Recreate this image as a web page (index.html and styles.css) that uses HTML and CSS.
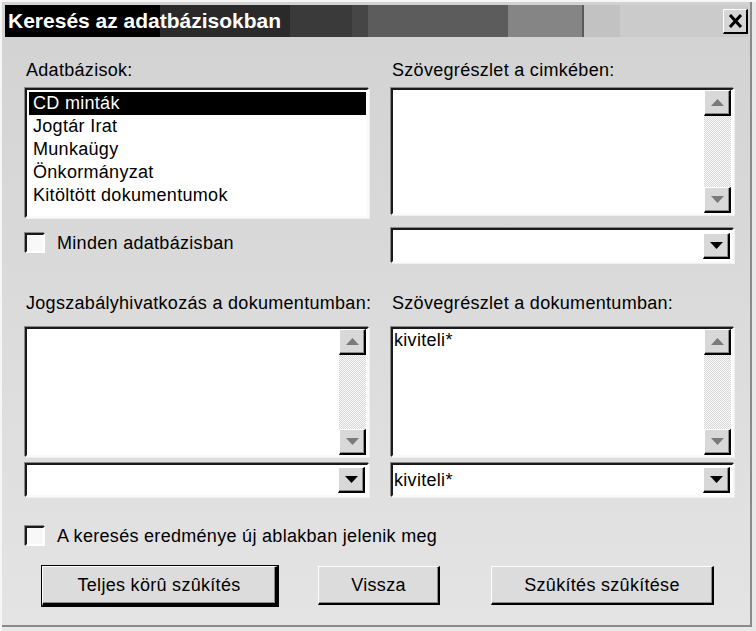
FILE: index.html
```html
<!DOCTYPE html>
<html lang="hu">
<head>
<meta charset="utf-8">
<title>Keresés az adatbázisokban</title>
<link rel="stylesheet" href="styles.css">
</head>
<body>
<div class="window">
    <div class="titlebar">
        <span class="title">Keresés az adatbázisokban</span>
        <div class="close">
            <svg width="15" height="14" viewBox="0 0 15 14"><path d="M2 1 L13 13 M13 1 L2 13" stroke="#000" stroke-width="3"/></svg>
        </div>
    </div>

    <div class="dialog">
        <div class="columns">
            <!-- sor 1 -->
            <div class="label">Adatbázisok:</div>
            <div class="label">Szövegrészlet a cimkében:</div>

            <!-- sor 2 -->
            <ul class="listbox">
                <li class="selected">CD minták</li>
                <li>Jogtár Irat</li>
                <li>Munkaügy</li>
                <li>Önkormányzat</li>
                <li>Kitöltött dokumentumok</li>
            </ul>
            <div class="memo short">
                <div class="memo-text"></div>
                <div class="scroll">
                    <div class="sbtn"><svg width="13" height="7" viewBox="0 0 13 7"><polygon points="0,7 6.5,0 13,7" fill="#7a7a7a"/></svg></div>
                    <div class="track"></div>
                    <div class="sbtn"><svg width="13" height="7" viewBox="0 0 13 7"><polygon points="0,0 13,0 6.5,7" fill="#7a7a7a"/></svg></div>
                </div>
            </div>

            <!-- sor 3 -->
            <div class="check first">
                <span class="box"></span>
                <span>Minden adatbázisban</span>
            </div>
            <div class="combo first">
                <div class="combo-text"></div>
                <div class="sbtn drop"><svg width="13" height="7" viewBox="0 0 13 7"><polygon points="0,0 13,0 6.5,7" fill="#000"/></svg></div>
            </div>

            <!-- sor 4 -->
            <div class="label lower">Jogszabályhivatkozás a dokumentumban:</div>
            <div class="label lower">Szövegrészlet a dokumentumban:</div>

            <!-- sor 5 -->
            <div class="memo tall">
                <div class="memo-text"></div>
                <div class="scroll">
                    <div class="sbtn"><svg width="13" height="7" viewBox="0 0 13 7"><polygon points="0,7 6.5,0 13,7" fill="#7a7a7a"/></svg></div>
                    <div class="track"></div>
                    <div class="sbtn"><svg width="13" height="7" viewBox="0 0 13 7"><polygon points="0,0 13,0 6.5,7" fill="#7a7a7a"/></svg></div>
                </div>
            </div>
            <div class="memo tall">
                <div class="memo-text">kiviteli*</div>
                <div class="scroll">
                    <div class="sbtn"><svg width="13" height="7" viewBox="0 0 13 7"><polygon points="0,7 6.5,0 13,7" fill="#7a7a7a"/></svg></div>
                    <div class="track"></div>
                    <div class="sbtn"><svg width="13" height="7" viewBox="0 0 13 7"><polygon points="0,0 13,0 6.5,7" fill="#7a7a7a"/></svg></div>
                </div>
            </div>

            <!-- sor 6 -->
            <div class="combo last">
                <div class="combo-text"></div>
                <div class="sbtn drop"><svg width="13" height="7" viewBox="0 0 13 7"><polygon points="0,0 13,0 6.5,7" fill="#000"/></svg></div>
            </div>
            <div class="combo last">
                <div class="combo-text">kiviteli*</div>
                <div class="sbtn drop"><svg width="13" height="7" viewBox="0 0 13 7"><polygon points="0,0 13,0 6.5,7" fill="#000"/></svg></div>
            </div>
        </div>

        <div class="check wide">
            <span class="box"></span>
            <span>A keresés eredménye új ablakban jelenik meg</span>
        </div>

        <div class="buttons">
            <div class="btn default b1">Teljes körû szûkítés</div>
            <div class="btn b2">Vissza</div>
            <div class="btn b3">Szûkítés szûkítése</div>
        </div>
    </div>
</div>
</body>
</html>
```

FILE: styles.css
```css
* {
    margin: 0;
    padding: 0;
}

body {
    background: #e6e6e6;
    font-family: "Liberation Sans", Arial, sans-serif;
    font-size: 18px;
    letter-spacing: 0.3px;
    color: #000;
}

li {
    list-style: none;
}

/* ablak keret */
.window {
    width: 756px;
    height: 631px;
    box-sizing: border-box;
    padding: 5px 8px 9px 5px;
    display: flex;
    flex-direction: column;
    background: linear-gradient(#d2d2d2, #e4e4e4);
    box-shadow: inset 2px 2px 0 #f6f6f6, inset -4px -4px 0 #e8e8e8, inset -6px -6px 0 #8a8a8a;
}

/* cimsor - lepcsozetes szurke atmenet */
.titlebar {
    height: 32px;
    display: flex;
    align-items: center;
    justify-content: space-between;
    padding-left: 3px;
    background: linear-gradient(to right,
        #000 0, #000 155px,
        #2a2a2a 155px, #2a2a2a 285px,
        #3a3a3a 285px, #3a3a3a 347px,
        #464646 347px, #464646 363px,
        #5c5c5c 363px, #5c5c5c 503px,
        #858585 503px, #858585 577px,
        #5a5a5a 577px, #5a5a5a 579px,
        #c2c2c2 579px, #c2c2c2 615px,
        #cbcbcb 615px);
}

.title {
    color: #fff;
    font-weight: bold;
    font-size: 21px;
    letter-spacing: 0;
}

.close {
    width: 25px;
    height: 25px;
    box-sizing: border-box;
    display: flex;
    align-items: center;
    justify-content: center;
    background: #d6d6d6;
    border-top: 1px solid #fff;
    border-left: 1px solid #fff;
    border-right: 2px solid #000;
    border-bottom: 2px solid #000;
}

.dialog {
    flex: 1;
    padding: 23px 0 0 20px;
}

.columns {
    display: grid;
    grid-template-columns: 344px 343px;
    column-gap: 22px;
    align-items: start;
}

.label {
    line-height: 20px;
    white-space: nowrap;
    padding-left: 1px;
}

.label.lower {
    margin-top: 30px;
}

/* besullyesztett keret */
.listbox,
.memo,
.combo {
    box-sizing: border-box;
    background: #fff;
    border: 2px solid;
    border-color: #1a1a1a #fafafa #fafafa #1a1a1a;
    box-shadow: -1px -1px 0 #8a8a8a, 1px 1px 0 #efefef;
}

.listbox {
    margin-top: 8px;
    height: 130px;
    padding: 2px 1px 2px 2px;
}

.listbox li {
    line-height: 23px;
    padding-left: 4px;
    white-space: nowrap;
}

.listbox .selected {
    background: #000;
    color: #fff;
}

.memo {
    display: flex;
}

.memo.short {
    margin-top: 8px;
    height: 127px;
}

.memo.tall {
    margin-top: 14px;
    height: 130px;
}

.memo-text {
    flex: 1;
    line-height: 23px;
    padding-left: 1px;
}

.scroll {
    width: 27px;
    display: flex;
    flex-direction: column;
    margin-right: 1px;
}

.track {
    flex: 1;
    background: repeating-conic-gradient(#d6d6d6 0 25%, #fafafa 0 50%) 0 0 / 2px 2px;
}

/* kiemelt gomb (gorgeto, legordulo) */
.sbtn {
    height: 26px;
    box-sizing: border-box;
    display: flex;
    align-items: center;
    justify-content: center;
    background: #d8d8d8;
    border-top: 1px solid #fff;
    border-left: 1px solid #fff;
    border-right: 2px solid #000;
    border-bottom: 2px solid #000;
    box-shadow: inset -1px -1px 0 #8c8c8c;
}

.combo {
    display: flex;
    align-items: center;
    height: 35px;
    padding: 0 2px 0 1px;
}

.combo.first {
    margin-top: 10px;
}

.combo.last {
    margin-top: 6px;
    height: 34px;
}

.combo-text {
    flex: 1;
}

.drop {
    width: 27px;
}

/* jelolonegyzet */
.check {
    display: flex;
    align-items: center;
    gap: 12px;
    line-height: 20px;
    white-space: nowrap;
}

.check.first {
    margin-top: 15px;
}

.check.wide {
    margin-top: 29px;
}

.box {
    width: 20px;
    height: 20px;
    box-sizing: border-box;
    background: #f8f8f8;
    border: 2px solid;
    border-color: #1a1a1a #fff #fff #1a1a1a;
    box-shadow: -1px -1px 0 #8a8a8a;
}

.buttons {
    display: flex;
    margin-top: 20px;
}

.btn {
    height: 39px;
    box-sizing: border-box;
    display: flex;
    align-items: center;
    justify-content: center;
    background: #dcdcdc;
    border-top: 1px solid #fff;
    border-left: 1px solid #fff;
    border-right: 2px solid #000;
    border-bottom: 2px solid #000;
    box-shadow: inset -1px -1px 0 #8c8c8c;
    white-space: nowrap;
}

.btn.default {
    height: 40px;
    outline: 1px solid #000;
    border-right-width: 3px;
    border-bottom-width: 3px;
}

.b1 {
    width: 236px;
    margin-left: 17px;
}

.b2 {
    width: 122px;
    margin-left: 40px;
}

.b3 {
    width: 223px;
    margin-left: 51px;
}
```
